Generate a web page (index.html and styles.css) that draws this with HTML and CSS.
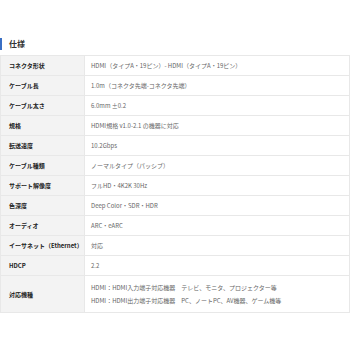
FILE: index.html
```html
<!DOCTYPE html>
<html lang="ja">
<head>
<meta charset="utf-8">
<link rel="stylesheet" href="styles.css">
</head>
<body>
<div class="page">
  <h2 class="heading">仕様</h2>
  <table class="spec">
    <tr><th>コネクタ形状</th><td>HDMI（タイプA・19ピン）- HDMI（タイプA・19ピン）</td></tr>
    <tr><th>ケーブル長</th><td>1.0m（コネクタ先端-コネクタ先端）</td></tr>
    <tr><th>ケーブル太さ</th><td>6.0mm ±0.2</td></tr>
    <tr><th>規格</th><td>HDMI規格 v1.0-2.1 の機器に対応</td></tr>
    <tr><th>転送速度</th><td>10.2Gbps</td></tr>
    <tr><th>ケーブル種類</th><td>ノーマルタイプ（パッシブ）</td></tr>
    <tr><th>サポート解像度</th><td>フルHD・4K2K 30Hz</td></tr>
    <tr><th>色深度</th><td>Deep Color・SDR・HDR</td></tr>
    <tr><th>オーディオ</th><td>ARC・eARC</td></tr>
    <tr><th>イーサネット（Ethernet）</th><td>対応</td></tr>
    <tr><th>HDCP</th><td>2.2</td></tr>
    <tr class="multi"><th>対応機種</th><td>HDMI：HDMI入力端子対応機器　テレビ、モニタ、プロジェクター等<br>HDMI：HDMI出力端子対応機器　PC、ノートPC、AV機器、ゲーム機等</td></tr>
  </table>
</div>
</body>
</html>
```
FILE: styles.css
```css
html, body {
  margin: 0;
  padding: 0;
  background: #ffffff;
}
body {
  font-family: "Noto Sans CJK JP", "Noto Sans", sans-serif;
  color: #333333;
}
.page {
  width: 350px;
  padding-top: 38px;
}
.heading {
  margin: 0 0 5px 0;
  height: 12px;
  border-left: 2px solid #3a6fc4;
  padding-left: 7px;
  font-size: 8px;
  line-height: 12px;
  font-weight: bold;
  color: #333333;
}
.spec {
  width: 350px;
  border-collapse: collapse;
  font-size: 6px;
}
.spec th,
.spec td {
  border: 1px solid #e8e8e8;
  height: 19px;
  padding: 0;
  text-align: left;
  vertical-align: middle;
  line-height: 10px;
}
.spec th {
  width: 75px;
  padding-left: 8px;
  background: #f3f3f3;
  color: #222222;
  font-weight: bold;
}
.spec td {
  padding-left: 6px;
  color: #666666;
  font-weight: normal;
}
.spec .multi th,
.spec .multi td {
  height: 36px;
  line-height: 13px;
}
```
